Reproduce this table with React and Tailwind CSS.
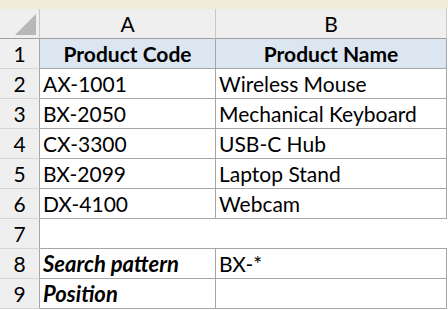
const rows = [
  { n: 1, a: "Product Code", b: "Product Name", head: true },
  { n: 2, a: "AX-1001", b: "Wireless Mouse" },
  { n: 3, a: "BX-2050", b: "Mechanical Keyboard" },
  { n: 4, a: "CX-3300", b: "USB-C Hub" },
  { n: 5, a: "BX-2099", b: "Laptop Stand" },
  { n: 6, a: "DX-4100", b: "Webcam" },
  { n: 7, a: "", b: "", blank: true },
  { n: 8, a: "Search pattern", b: "BX-*", label: true },
  { n: 9, a: "Position", b: "", label: true },
];

export default function App() {
  return (
    <div
      className="w-[448px] h-[310px] overflow-hidden bg-white text-black"
      style={{ fontFamily: "Lato, 'Liberation Sans', sans-serif" }}
    >
      <div className="h-[9px] bg-[#efecd9]" />
      <div className="grid grid-cols-[40px_176px_231px] text-[21px] leading-none">
        {/* column headers */}
        <div className="relative h-[30px] bg-[#efefef] border-r border-b border-r-[#c8c8c8] border-b-[#a0a0a0]">
          <svg className="absolute left-[15px] top-[5px]" width="22" height="22" viewBox="0 0 22 22">
            <polygon points="0,21 21,0 21,21" fill="#b7b7b7" />
          </svg>
        </div>
        <div className="h-[30px] flex items-center justify-center bg-[#efefef] border-r border-b border-r-[#c8c8c8] border-b-[#a0a0a0]">
          A
        </div>
        <div className="h-[30px] flex items-center justify-center bg-[#efefef] border-r border-b border-r-[#c8c8c8] border-b-[#a0a0a0]">
          B
        </div>

        {rows.map((r) => (
          <Row key={r.n} r={r} />
        ))}
      </div>
    </div>
  );
}

function Row({ r }) {
  const cell = r.blank
    ? "border-b border-b-[#a6a6a6]"
    : "border-r border-b border-[#a6a6a6]";
  const bg = r.head ? "bg-[#dce6f1]" : "bg-white";
  const text = r.head ? "font-bold" : r.label ? "font-bold italic text-[22px]" : "";
  return (
    <>
      <div className="h-[30px] flex items-center justify-center bg-[#efefef] border-r border-b border-r-[#a6a6a6] border-b-[#d6d6d6]">
        {r.n}
      </div>
      <div
        className={`h-[30px] flex items-center ${r.head ? "justify-center" : "pl-[3px]"} ${bg} ${cell} ${text}`}
      >
        {r.a}
      </div>
      <div
        className={`h-[30px] flex items-center ${r.head ? "justify-center" : "pl-[3px]"} ${bg} ${cell} ${r.head ? "font-bold" : ""}`}
      >
        {r.b}
      </div>
    </>
  );
}
